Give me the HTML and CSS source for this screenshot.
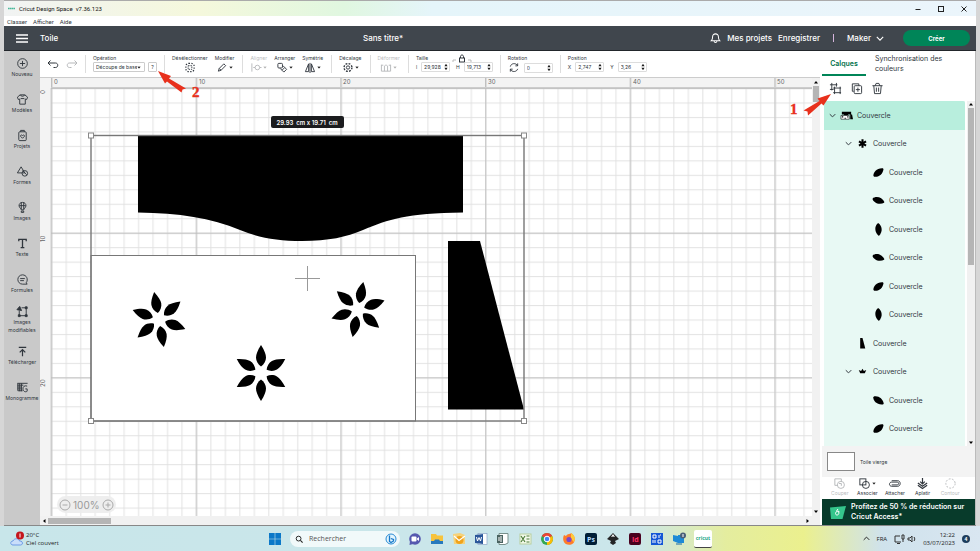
FILE: index.html
```html
<!DOCTYPE html>
<html lang="fr">
<head>
  <meta charset="UTF-8" />
  <meta name="viewport" content="width=device-width, initial-scale=1.0" />
  <title>Cricut Design Space v7.36.123</title>
  <link rel="stylesheet" href="styles.css">
</head>
<body>
  <svg class="defs" aria-hidden="true">
    <symbol id="leaf" viewBox="-6 -6 12 12"><path d="M-6 0C-3.5-3.6 2-4.2 6 0C2 4.200-3.5 3.600-6 0Z"/></symbol>
    <symbol id="caret" viewBox="0 0 6 4"><path d="M0.5 0.5H5.5L3 3.7Z"/></symbol>
    <symbol id="chevron" viewBox="0 0 10 6"><path d="M1 1L5 5L9 1" fill="none" stroke="currentColor" stroke-width="1.4"/></symbol>
    <symbol id="stepper" viewBox="0 0 6 10"><path d="M1 4L3 1L5 4ZM1 6L3 9L5 6Z"/></symbol>
  </svg>

  <div class="window">
    <div class="titlebar">
      <svg class="mark" viewBox="0 0 7 3"><path d="M0 1.5H7" stroke="#49b89a" stroke-width="1.4" stroke-dasharray="1.6 .3"/></svg>
      <span class="app-name">Cricut Design Space&nbsp; v7.36.123</span>
      <button aria-label="Réduire"><svg viewBox="0 0 8 8"><path d="M1.5 4.5H6.5"/></svg></button>
      <button aria-label="Agrandir"><svg viewBox="0 0 8 8"><rect x="1.5" y="1.5" width="5" height="5"/></svg></button>
      <button aria-label="Fermer"><svg viewBox="0 0 8 8"><path d="M1.5 1.5L6.5 6.5M6.5 1.5L1.5 6.5"/></svg></button>
    </div>
    <nav class="menubar">
      <a href="#">Classer</a><a href="#">Afficher</a><a href="#">Aide</a>
    </nav>

    <header class="header">
      <div class="header-left">
        <button class="burger" aria-label="Menu"><svg viewBox="0 0 12 9"><path d="M0 1H12M0 4.5H12M0 8H12" stroke="#fff" stroke-width="1.3"/></svg></button>
        <span>Toile</span>
      </div>
      <h1>Sans titre*</h1>
      <div class="header-right">
        <svg class="bell" viewBox="0 0 12 13" fill="none" stroke="#fff" stroke-width="1.1"><path d="M1.5 9.5H10.5C9.3 8.5 9.2 7 9.2 5.5C9.2 3.2 7.8 2 6 2S2.8 3.2 2.8 5.5C2.8 7 2.7 8.5 1.5 9.5ZM4.5 10C4.7 12 7.3 12 7.5 10"/></svg>
        <a href="#">Mes projets</a>
        <a href="#">Enregistrer</a>
        <span class="bar"></span>
        <button class="machine">Maker <svg viewBox="0 0 10 6"><use href="#chevron"/></svg></button>
        <button class="make">Créer</button>
      </div>
    </header>

    <div class="main">
      <aside class="sidebar">
        <button><svg viewBox="0 0 14 14"><circle cx="7" cy="7" r="5.2"/><path d="M7 4.2V9.8M4.2 7H9.8"/></svg>Nouveau</button>
        <button><svg viewBox="0 0 14 14"><path d="M4.5 2H9.5L12.5 4.5L11.5 7L10 6.5V12H4V6.5L2.5 7L1.5 4.5ZM4.5 2C5.5 4 8.5 4 9.5 2M5 6H9"/></svg>Modèles</button>
        <button><svg viewBox="0 0 14 14"><rect x="3" y="3" width="8" height="9.5" rx="1"/><path d="M5 3V1.5H9V3M7 10L5 8C4.5 6.5 6.3 5.8 7 7C7.7 5.8 9.5 6.5 9 8Z"/></svg>Projets</button>
        <button><svg viewBox="0 0 14 14"><path d="M5.5 2L9.5 8.5H1.5Z"/><circle cx="9.5" cy="9" r="3"/><path d="M7 6L11.5 10.5"/></svg>Formes</button>
        <button><svg viewBox="0 0 14 14"><path d="M7 1.5C4.5 1.5 3.3 3.2 3.3 5C3.3 7 5.5 8 5.7 9.5H8.3C8.5 8 10.7 7 10.7 5C10.7 3.2 9.5 1.5 7 1.5ZM5.7 1.8V9M8.3 1.8V9M3.5 5H10.5M5.7 12.3H8.3V10.8H5.7Z"/></svg>Images</button>
        <button><svg viewBox="0 0 14 14"><path d="M3 4.5V2.5H11V4.5M7 2.5V11.5M5 11.5H9" stroke-width="1.4"/></svg>Texte</button>
        <button><svg viewBox="0 0 14 14"><path d="M11 10.5C13.5 7 11.5 2 7 2C4 2 2 4.3 2 7S4 12 7 12H12L11 10.5M4.5 6H9.5M4.5 8.2H8.5"/></svg>Formules</button>
        <button><svg viewBox="0 0 14 14"><path d="M3.5 6V11.5H11V3H6"/><path d="M1 5L4 1.5L6 6Z" fill="#30363d"/><path d="M10 2H12V4H10ZM10 10.5H12V12.5H10ZM2.5 10.5H4.5V12.5H2.5Z" fill="#30363d"/></svg>Images modifiables</button>
        <button><svg viewBox="0 0 14 14"><path d="M3 2.5H11M7 12V5M4 8L7 5L10 8" stroke-width="1.3"/></svg>Télécharger</button>
        <button><svg viewBox="0 0 14 14"><path d="M1.5 2.5H12.5M1.5 4.5H8M1.5 6.5H6M1.5 8.5H6M2 10.5H7M2 2.5V10.5M4 2.5V11M6 2.5V11M12 5.5C9 4.5 7.5 6 7.5 8.5S10 12.5 12 11V8.5H10"/></svg>Monogramme</button>
      </aside>

      <section class="workspace">
        <div class="toolbar">
          <div class="history">
            <button aria-label="Annuler"><svg viewBox="0 0 12 10"><path d="M3.5 1L1 3.5L3.5 6M1 3.5H8.5C11.5 3.5 11.5 8 8.5 8H6.5"/></svg></button>
            <button aria-label="Rétablir" disabled><svg viewBox="0 0 12 10"><path d="M8.5 1L11 3.5L8.5 6M11 3.5H3.5C.5 3.5.5 8 3.5 8H5.5"/></svg></button>
          </div>
          <div class="tool operation">
            <label for="operation">Opération</label>
            <div class="row">
              <span class="select"><select id="operation"><option>Découpe de base</option></select><svg class="caret" viewBox="0 0 6 4"><use href="#caret"/></svg></span>
              <button class="help">?</button>
            </div>
          </div>
          <div class="group">
            <button class="tool"><span>Désélectionner</span><svg viewBox="0 0 12 12"><rect x="1.5" y="1.5" width="9" height="9" rx="3" stroke-width="1.3" stroke-dasharray="1.5 1.5"/><path d="M4 4H8V8H4Z" stroke-dasharray="1.5 1"/></svg></button>
            <button class="tool"><span>Modifier</span><i><svg viewBox="0 0 12 12"><path d="M2 10L3 7L8 2L10 4L5 9ZM3 7L5 9"/></svg><svg class="caret" viewBox="0 0 6 4"><use href="#caret"/></svg></i></button>
          </div>
          <div class="group">
            <button class="tool" disabled><span>Aligner</span><i><svg viewBox="0 0 12 12"><path d="M1.5 1.5V10.5M3 6H5M10 6H12"/><circle cx="7.5" cy="6" r="2.5"/></svg><svg class="caret" viewBox="0 0 6 4"><use href="#caret"/></svg></i></button>
            <button class="tool"><span>Arranger</span><i><svg viewBox="0 0 12 12"><rect x="1.5" y="1.5" width="5" height="5" rx="1"/><path d="M7 4L9 6L6 9L4 7M9 6L11 8L8 11L6 9"/></svg><svg class="caret" viewBox="0 0 6 4"><use href="#caret"/></svg></i></button>
            <button class="tool"><span>Symétrie</span><i><svg viewBox="0 0 12 12"><path d="M4.5 2L1 10.5H4.5ZM7.5 2L11 10.5H7.5ZM6 1V12"/></svg><svg class="caret" viewBox="0 0 6 4"><use href="#caret"/></svg></i></button>
          </div>
          <div class="group">
            <button class="tool"><span>Décalage</span><i><svg viewBox="0 0 12 12"><circle cx="6" cy="6" r="1.8"/><circle cx="6" cy="6" r="4.3" stroke-width="1.5" stroke-dasharray="2 1.4"/></svg><svg class="caret" viewBox="0 0 6 4"><use href="#caret"/></svg></i></button>
          </div>
          <div class="group">
            <button class="tool" disabled><span>Déformer</span><i><svg viewBox="0 0 12 12"><path d="M1 3V10H11V3M4.3 4V10M7.7 4V10M1 3.5H3M5 3.5H7M9 3.5H11"/></svg><svg class="caret" viewBox="0 0 6 4"><use href="#caret"/></svg></i></button>
          </div>
          <div class="tool size">
            <div class="row title"><span>Taille</span><svg class="lock" viewBox="0 0 20 9"><path d="M1 8V6H4M19 8V6H16" stroke="#bbb"/><rect x="7.5" y="4" width="5" height="4"/><path d="M8.5 4V2.5C8.5.5 11.5.5 11.5 2.5V4"/></svg></div>
            <div class="row">
              <label class="field">l<span><input value="29,928"><svg class="step" viewBox="0 0 6 10"><use href="#stepper"/></svg></span></label>
              <label class="field">H<span><input value="19,713"><svg class="step" viewBox="0 0 6 10"><use href="#stepper"/></svg></span></label>
            </div>
          </div>
          <div class="tool rotation">
            <span>Rotation</span>
            <label class="field"><svg viewBox="0 0 12 12"><path d="M2 5C3 1 8 .8 10 4M10 1.5V4.2H7.5M10 7.5C9 11 4 11.5 2 8M2 10.5V7.8H4.5"/></svg><span><input aria-label="Rotation" value="0"><svg class="step" viewBox="0 0 6 10"><use href="#stepper"/></svg></span></label>
          </div>
          <div class="tool position">
            <span>Position</span>
            <div class="row">
              <label class="field">X<span><input value="2,747"><svg class="step" viewBox="0 0 6 10"><use href="#stepper"/></svg></span></label>
              <label class="field">Y<span><input value="3,26"><svg class="step" viewBox="0 0 6 10"><use href="#stepper"/></svg></span></label>
            </div>
          </div>
        </div>

        <div class="board">
          <div class="corner"></div>
          <svg class="ruler">
            <defs><pattern id="ticks" width="144.67" height="12" patternUnits="userSpaceOnUse"><path d="M.8 0V12" stroke="#aaa"/></pattern></defs>
            <rect width="100%" height="12" fill="url(#ticks)"/>
            <text x="3" y="6">0</text><text x="148" y="6">10</text><text x="292" y="6">20</text><text x="437" y="6">30</text><text x="582" y="6">40</text><text x="726" y="6">50</text>
          </svg>
          <div class="scroll-v">
            <svg viewBox="0 0 6 4"><path d="M1 3.5L3 1L5 3.5Z"/></svg><span></span>
            <svg class="end" viewBox="0 0 6 4"><path d="M1 .5L3 3L5 .5Z"/></svg>
          </div>
          <svg class="ruler-v">
            <g transform="rotate(-90)"><text x="-6" y="5">0</text><text x="-154" y="5">10</text><text x="-299" y="5">20</text></g>
          </svg>
          <div class="canvas">
            <svg class="drawing">
              <defs>
                <pattern id="minor" width="14.467" height="14.467" patternUnits="userSpaceOnUse"><path d="M.8 0V14.467M0 .6H14.467" stroke="#dfdfdf" stroke-width=".9"/></pattern>
                <pattern id="major" width="144.67" height="144.67" patternUnits="userSpaceOnUse"><path d="M.8 0V144.67M0 .6H144.67" stroke="#bbb" stroke-width=".9"/></pattern>
                <path id="petal" d="M0-28C3.5-22.5 5-18.5 5-15.5C5-12 3-8.5 0-6.5C-3-8.5-5-12-5-15.5C-5-18.5-3.5-22.5 0-28Z"/>
                <g id="flower"><use href="#petal"/><use href="#petal" transform="rotate(60)"/><use href="#petal" transform="rotate(120)"/><use href="#petal" transform="rotate(180)"/><use href="#petal" transform="rotate(240)"/><use href="#petal" transform="rotate(300)"/></g>
              </defs>
              <rect width="100%" height="100%" fill="url(#minor)"/>
              <rect width="100%" height="100%" fill="url(#major)"/>
              <path d="M87 48H412V124.5C355 125.5 338 131 312 142C295 149 278 153 251 153C226 153 208 150 189 142C160 130 128 125 87 124.5Z"/>
              <path d="M397 153H429L473 321.5H397Z"/>
              <rect x="40" y="167.5" width="324.5" height="165.5" fill="#fff" stroke="#777"/>
              <use href="#flower" transform="translate(108 231.5) rotate(-10)"/>
              <use href="#flower" transform="translate(210 285)"/>
              <use href="#flower" transform="translate(307 221.5) rotate(11)"/>
              <path d="M244 190.5H269M256.5 178V203" stroke="#999"/>
              <rect x="40" y="47.5" width="433" height="285.5" fill="none" stroke="#777" stroke-width="1.4"/>
              <g fill="#fff" stroke="#888"><rect x="37.5" y="45" width="5" height="5"/><rect x="470.5" y="45" width="5" height="5"/><rect x="37.5" y="330.5" width="5" height="5"/><rect x="470.5" y="330.5" width="5" height="5"/></g>
              <rect x="220" y="28" width="73" height="12" rx="2" fill="#1b1c1e"/>
              <text class="dimension" x="256" y="37">29.93&#160; cm x 19.71&#160; cm</text>
            </svg>
            <div class="zoom">
              <button aria-label="Zoom arrière"><svg viewBox="0 0 12 12"><circle cx="6" cy="6" r="5"/><path d="M3.5 6H8.5"/></svg></button>
              <span>100%</span>
              <button aria-label="Zoom avant"><svg viewBox="0 0 12 12"><circle cx="6" cy="6" r="5"/><path d="M3.5 6H8.5M6 3.5V8.5"/></svg></button>
            </div>
          </div>
          <div class="scroll-h">
            <svg viewBox="0 0 4 6"><path d="M3.5 1L1 3L3.5 5Z"/></svg><span></span>
            <svg class="end" viewBox="0 0 4 6"><path d="M.5 1L3 3L.5 5Z"/></svg>
          </div>
        </div>
      </section>

      <aside class="panel">
        <div class="tabs">
          <button class="active">Calques</button>
          <button>Synchronisation des couleurs</button>
        </div>
        <div class="layer-tools">
          <button aria-label="Dissocier"><svg viewBox="0 0 14 14"><path d="M3 1V9M1 3H9M8 1V5M1 8H5M6 5V13M12 5V13M4.5 6.5H13M4.5 11.5H13"/></svg></button>
          <button aria-label="Dupliquer"><svg viewBox="0 0 14 14"><path d="M4 10H2.5V2H9.5V4"/><rect x="4.5" y="4" width="8" height="8.5" rx="1"/><path d="M8.5 6V10.5M6.3 8.2H10.7"/></svg></button>
          <button aria-label="Supprimer"><svg viewBox="0 0 14 14"><path d="M1.5 4H12.5M4.5 4L5.5 1.5H8.5L9.5 4M3 4L3.8 12.5H10.2L11 4M5.8 6V10.5M8.2 6V10.5"/></svg></button>
        </div>
        <div class="layers">
          <ul>
            <li class="selected"><svg class="chev" viewBox="0 0 10 6"><use href="#chevron"/></svg><svg class="thumb" viewBox="-7 -7 14 14"><path d="M-5-4H5V-1L2-1L1 0H-2L-3-1H-5ZM4-1H6L7 4H4Z"/><path d="M-6 0H3V4H-6Z" fill="#fff" stroke="#000" stroke-width=".6"/><path d="M-5 1.5H-3.5M-2 3H-.8M.8 1.5H2" stroke="#000" stroke-width="1.2"/></svg>Couvercle</li>
            <li class="child"><svg class="chev" viewBox="0 0 10 6"><use href="#chevron"/></svg><svg class="thumb" viewBox="-7 -7 14 14"><path d="M0-4.5V4.5M-3.8-2.3L3.8 2.3M-3.8 2.3L3.8-2.3" stroke="#000" stroke-width="2.2"/></svg>Couvercle</li>
            <li class="leaf"><svg class="thumb rise" viewBox="-6 -6 12 12"><use href="#leaf" x="-6" y="-6" width="12" height="12"/></svg>Couvercle</li>
            <li class="leaf"><svg class="thumb fall" viewBox="-6 -6 12 12"><use href="#leaf" x="-6" y="-6" width="12" height="12"/></svg>Couvercle</li>
            <li class="leaf"><svg class="thumb upright" viewBox="-6 -6 12 12"><use href="#leaf" x="-6" y="-6" width="12" height="12"/></svg>Couvercle</li>
            <li class="leaf"><svg class="thumb fall" viewBox="-6 -6 12 12"><use href="#leaf" x="-6" y="-6" width="12" height="12"/></svg>Couvercle</li>
            <li class="leaf"><svg class="thumb rise" viewBox="-6 -6 12 12"><use href="#leaf" x="-6" y="-6" width="12" height="12"/></svg>Couvercle</li>
            <li class="leaf"><svg class="thumb upright" viewBox="-6 -6 12 12"><use href="#leaf" x="-6" y="-6" width="12" height="12"/></svg>Couvercle</li>
            <li class="child"><svg class="chev"></svg><svg class="thumb" viewBox="-7 -7 14 14"><path d="M-2.5-6H0L3 5.5H-2.5Z"/></svg>Couvercle</li>
            <li class="child"><svg class="chev" viewBox="0 0 10 6"><use href="#chevron"/></svg><svg class="thumb" viewBox="-7 -7 14 14"><path d="M0-3L1.5-.5L4-1.5L2.5 2H-2.5L-4-1.5L-1.5-.5Z"/></svg>Couvercle</li>
            <li class="leaf"><svg class="thumb steep" viewBox="-6 -6 12 12"><use href="#leaf" x="-6" y="-6" width="12" height="12"/></svg>Couvercle</li>
            <li class="leaf"><svg class="thumb rise" viewBox="-6 -6 12 12"><use href="#leaf" x="-6" y="-6" width="12" height="12"/></svg>Couvercle</li>
          </ul>
          <div class="scroll-v">
            <svg viewBox="0 0 6 4"><path d="M1 3.5L3 1L5 3.5Z"/></svg><span></span>
            <svg class="end" viewBox="0 0 6 4"><path d="M1 .5L3 3L5 .5Z"/></svg>
          </div>
        </div>
        <div class="blank"><span></span>Toile vierge</div>
        <div class="actions">
          <button disabled><svg viewBox="0 0 14 14"><path d="M5 9H2V2H9V5"/><circle cx="8.5" cy="8.5" r="3.8"/><path d="M6.5 7H9V9.5"/></svg>Couper</button>
          <button><i><svg viewBox="0 0 14 14"><rect x="2" y="2" width="6.5" height="6.5"/><circle cx="8.5" cy="8.5" r="3.8"/></svg><svg class="caret" viewBox="0 0 6 4"><use href="#caret"/></svg></i>Associer</button>
          <button><svg viewBox="0 0 14 14"><path d="M4 8.5H10C12 8.5 12 5.5 10 5.5H4C.8 5.5.8 10 4 10H10.5C14 10 14 4 10.5 4H4"/></svg>Attacher</button>
          <button><svg viewBox="0 0 14 14"><path d="M7 1V7M4.5 5L7 7.5L9.5 5M2 6.5L7 10L12 6.5M2 9L7 12.5L12 9" stroke-width="1.3"/></svg>Aplatir</button>
          <button disabled><svg viewBox="0 0 14 14"><circle cx="7" cy="7" r="5" stroke-dasharray="2 1.5"/></svg>Contour</button>
        </div>
        <a class="promo" href="#">
          <svg viewBox="0 0 16 13"><path d="M0 1.5L16 0L12.5 13H1Z" fill="#35c58b"/><path d="M9 5.5C8 4.5 5.5 5.5 5.5 7.5S8.5 9.5 8.8 7.5V5M6.5 5L8 3" fill="none" stroke="#fff"/></svg>
          <span>Profitez de 50 % de réduction sur Cricut Access*</span>
        </a>
      </aside>
    </div>
  </div>

  <div class="taskbar">
    <div class="weather">
      <svg viewBox="0 0 15 15"><path d="M3 14C0 14 0 10 3 10C4 7 9 7 9.5 10C13 9.5 13.5 14 10.5 14Z" fill="#c9defa" stroke="#6e9be6"/><circle cx="10" cy="4.5" r="4" fill="#c4161c"/><path d="M10 2.5V6.5" stroke="#fff"/></svg>
      <p>20°C<br>Ciel couvert</p>
    </div>
    <div class="apps">
      <svg viewBox="0 0 14 14"><path d="M1 1H6.7V6.7H1ZM7.3 1H13V6.7H7.3ZM1 7.3H6.7V13H1ZM7.3 7.3H13V13H7.3Z" fill="#0b78c8"/></svg>
      <label class="search">
        <svg viewBox="0 0 10 10"><circle cx="4.5" cy="4.5" r="3" fill="none" stroke="#222" stroke-width="1.2"/><path d="M6.8 6.8L9.5 9.5" stroke="#222" stroke-width="1.3"/></svg>
        <input placeholder="Rechercher">
        <svg class="bing" viewBox="0 0 12 12"><circle cx="6" cy="6" r="5" fill="#e3f5fd" stroke="#2a8bd4"/><path d="M4.5 2.5V8.5L6 9.5L8.5 8V6.5L5.8 5.5" fill="none" stroke="#1577c9" stroke-width="1.3"/></svg>
      </label>
      <svg viewBox="0 0 14 14"><path d="M1.5 13L2 9L5 12Z" fill="#5558af"/><circle cx="7" cy="7" r="5.8" fill="#5558af"/><rect x="3.5" y="4.5" width="5" height="5" rx="1" fill="#fff"/><path d="M9 6.5L11 5V9L9 7.5Z" fill="#fff"/></svg>
      <svg viewBox="0 0 14 14"><path d="M1 2H6L7 3.5H13V12H1Z" fill="#f7c33c"/><path d="M1 9H4L5 7.5H9L10 9H13V12H1Z" fill="#2779bd"/></svg>
      <svg viewBox="0 0 14 14"><path d="M1 2L8 1L13 3V12H2Z" fill="#f6d27a"/><circle cx="7.5" cy="8" r="4" fill="#f0a31c"/><path d="M2 4L7 8.5L13 4" fill="none" stroke="#fff" stroke-width="1.2"/></svg>
      <svg viewBox="0 0 14 14"><rect x="4" y="1.5" width="9" height="11" fill="#fff" stroke="#8ba4c8" stroke-width=".7"/><path d="M1 3L9 2V12L1 11Z" fill="#2b579a"/><path d="M2.5 5L3.5 9L5 5.5L6.5 9L7.5 5" fill="none" stroke="#fff"/></svg>
      <svg viewBox="0 0 14 14"><path d="M3 1.5H12V11L9 12.5H3Z" fill="#fff" stroke="#78908c"/><path d="M1 3H7V11H1Z" fill="#4a6361"/><path d="M3 5V9M5 4V10M9 4V9" stroke="#fff"/></svg>
      <svg viewBox="0 0 14 14"><rect x="2" y="2" width="11" height="10" fill="#f3faeb" stroke="#b9cf9e"/><path d="M3 4L7 10M7 4L3 10M8.5 4H11.5M8.5 7H11.5M8.5 10H11.5" stroke="#4f7d3b" stroke-width="1.2"/></svg>
      <svg viewBox="0 0 14 14"><circle cx="7" cy="7" r="6" fill="#34a853"/><path d="M7 7L1.8 4A6 6 0 0 1 12.2 4Z" fill="#ea4335"/><path d="M7 7L12.2 4A6 6 0 0 1 7 13Z" fill="#fbbc05"/><circle cx="7" cy="7" r="2.8" fill="#4285f4" stroke="#fff"/></svg>
      <svg viewBox="0 0 14 14"><path d="M2 3L4 4C6 1 8 3 9 1C13 3 14 9 11 11.5C8 14 3 13 1.5 9C1 7 1 5 2 3Z" fill="#ff7c2a"/><path d="M9 1C13 3 14 8 11.5 10L9 6Z" fill="#ffca3a"/><circle cx="7" cy="7.5" r="2.6" fill="#7e45c9"/></svg>
      <svg viewBox="0 0 14 14"><rect x="1" y="1" width="12" height="12" rx="2" fill="#001e36"/><text x="3" y="9.5" fill="#b5dcff">Ps</text></svg>
      <svg viewBox="0 0 14 14"><path d="M7 1L13 7L9 9L10 11L7 13L4 11L5 9L1 7Z" fill="#242526"/><path d="M7 2L9 5L7 4.5L5 5Z" fill="#fff"/></svg>
      <svg viewBox="0 0 14 14"><rect x="1" y="1" width="12" height="12" rx="2" fill="#49021f"/><text x="4" y="9.5" fill="#ff3366">Id</text></svg>
      <svg viewBox="0 0 14 14"><rect x="1" y="1" width="12" height="12" fill="#1557d6"/><path d="M3 3H6V6H3ZM9 3V6M11 3H10M3 8V11M5 8V11M8 8H11V11H8Z" fill="none" stroke="#fff"/></svg>
      <svg viewBox="0 0 14 14"><path d="M1 3L6 4V11L1 9ZM6 3H12V11H6Z" fill="#1d8ad6"/><path d="M4 12H10" stroke="#1769a5"/><circle cx="11" cy="3.5" r="3" fill="#4a5f78"/><path d="M11 2V5" stroke="#fff"/></svg>
      <span class="cricut">cricut</span>
    </div>
    <div class="tray">
      <svg class="up" viewBox="0 0 10 6"><path d="M1 5L5 1L9 5" fill="none" stroke="#222" stroke-width="1.4"/></svg>
      <span>FRA</span>
      <svg viewBox="0 0 22 10" class="status"><path d="M6 2H1V8H7M3 9.5H6M8 1H10V5H8ZM9 5V8M14 4H16L18 2V8L16 6H14ZM20 3C21 4.5 21 5.5 20 7" fill="none" stroke="#333"/></svg>
      <p>12:22<br>03/07/2023</p>
      <b>4</b>
    </div>
  </div>

  <!-- step markers -->
  <svg class="note note-panel" viewBox="0 0 42 26"><text x="0" y="21">1</text><path d="M41 1L33.5 12.5L31.5 10.5L18 22.5L17.5 18.5L13.5 17.5L29.5 8L27.5 5.5Z"/></svg>
  <svg class="note note-tool" viewBox="0 0 44 30"><text x="34" y="27">2</text><path d="M0 1L13 6L11 8.500L28 18.500L24.500 19.500L23.500 22.500L9 11.500L7 13.500Z"/></svg>
</body>
</html>
```
FILE: styles.css
```css
* {
  box-sizing: border-box;
}

body {
  margin: 0;
  height: 100vh;
  display: flex;
  flex-direction: column;
  position: relative;
  overflow: hidden;
  background: #d6d6d6;
  font-family: Inter, "Liberation Sans", sans-serif;
  font-size: 7px;
  color: #30363d;
}

button, input, select {
  font: inherit;
  color: inherit;
  background: none;
  border: 0;
  padding: 0;
  margin: 0;
}

a {
  color: inherit;
  text-decoration: none;
}

p, ul, h1 {
  margin: 0;
  padding: 0;
}

svg {
  display: block;
  flex: none;
}

.defs {
  position: absolute;
  width: 0;
  height: 0;
}

.window {
  flex: 1;
  min-height: 0;
  margin: 0 4px;
  display: flex;
  flex-direction: column;
  background: #fff;
  border-top: 1px solid #aaa;
  border-bottom: 1px solid #888;
}

.titlebar {
  height: 15px;
  display: flex;
  align-items: center;
  padding: 0 1px 0 4px;
  font-family: Roboto, sans-serif;
  font-size: 6px;
  color: #111;
  background: linear-gradient(90deg, #f1f3f3, #f5f8dc 20%, #e0f7e0 35%, #e5f5fa 44%, #ebf5fb);
}

.titlebar .mark {
  width: 7px;
  height: 3px;
  margin-right: 4px;
}

.app-name {
  flex: 1;
}

.titlebar button {
  width: 23px;
  display: flex;
  justify-content: center;
}

.titlebar button svg {
  width: 8px;
  height: 8px;
  fill: none;
  stroke: #222;
}

.menubar {
  height: 10px;
  display: flex;
  gap: 6px;
  align-items: center;
  padding-left: 3px;
  font-family: Roboto, sans-serif;
  font-size: 6px;
}

.header {
  height: 25px;
  display: grid;
  grid-template-columns: 359px 1fr auto;
  align-items: center;
  background: #40464d;
  border-bottom: 1px solid #22262b;
  color: #fff;
  font-size: 8px;
  font-weight: 500;
}

.header h1 {
  font-size: 8px;
  font-weight: 500;
}

.header-left, .header-right {
  display: flex;
  align-items: center;
}

.header-left {
  padding-left: 12px;
  gap: 12px;
}

.burger svg {
  width: 12px;
  height: 9px;
}

.header-right {
  gap: 6px;
  padding-right: 6px;
}

.bell {
  width: 11px;
  height: 12px;
}

.bar {
  width: 1px;
  height: 8px;
  margin: 0 7px;
  background: #d5b4dc;
}

.machine {
  display: flex;
  align-items: center;
  gap: 5px;
}

.machine svg {
  width: 8px;
  height: 5px;
}

.make {
  width: 67px;
  height: 16px;
  margin-left: 13px;
  border-radius: 8px;
  background: #008558;
  font-size: 6px;
  font-weight: 700;
}

.main {
  flex: 1;
  min-height: 0;
  display: flex;
}

.sidebar {
  width: 36px;
  background: #c9c9c9;
}

.sidebar button {
  width: 100%;
  height: 36px;
  display: flex;
  flex-direction: column;
  align-items: center;
  justify-content: center;
  padding-bottom: 4px;
  font-size: 5px;
  line-height: 8px;
}

.sidebar svg {
  width: 13px;
  height: 13px;
  fill: none;
  stroke: #30363d;
}

.workspace {
  flex: 1;
  min-width: 0;
  display: flex;
  flex-direction: column;
}

.toolbar {
  height: 26px;
  display: flex;
  align-items: center;
  font-size: 5px;
  line-height: 6px;
  white-space: nowrap;
}

.toolbar > div {
  height: 18px;
  padding: 0 7px;
  border-left: 1px solid #ddd;
}

.toolbar > .group {
  padding-right: 8px;
}

.toolbar > .history {
  border: 0;
  display: flex;
  align-items: center;
  gap: 7px;
}

.group, .row, .tool i {
  display: flex;
  align-items: center;
}

.group {
  gap: 7px;
}

.row {
  gap: 3px;
}

.tool {
  display: flex;
  flex-direction: column;
  gap: 1px;
}

button.tool {
  align-items: center;
}

.toolbar svg {
  width: 12px;
  height: 11px;
  fill: none;
  stroke: #30363d;
}

.toolbar .tool i {
  gap: 1px;
}

.toolbar .caret, .actions .caret {
  width: 4px;
  height: 3px;
  fill: #222;
  stroke: none;
}

button:disabled {
  opacity: 0.35;
}

.select {
  width: 52px;
  height: 10px;
  display: flex;
  align-items: center;
  padding: 0 3px 0 2px;
  border: 1px solid #ccc;
  border-radius: 1px;
}

.select select {
  flex: 1;
  min-width: 0;
  appearance: none;
}

.help {
  width: 9px;
  height: 10px;
  border: 1px solid #ccc;
  border-radius: 1px;
}

.field {
  display: flex;
  align-items: center;
  gap: 4px;
}

.field span {
  display: flex;
  align-items: center;
  height: 10px;
  border: 1px solid #ddd;
  border-radius: 1px;
  padding-left: 2px;
}

.field input {
  width: 19px;
  height: 8px;
}

.toolbar .step {
  width: 6px;
  height: 8px;
  fill: #222;
  stroke: none;
}

.size .row, .position .row {
  gap: 6px;
}

.size .title {
  gap: 24px;
  height: 6px;
}

.toolbar .lock {
  width: 20px;
  height: 9px;
}

.board {
  flex: 1;
  min-height: 0;
  display: grid;
  grid-template-columns: 11px 1fr 8px;
  grid-template-rows: 10px 1fr 9px;
  margin-right: 2px;
  border-top: 1px solid #ccc;
}

.corner, .ruler, .ruler-v {
  background: #f3f3f3;
}

.ruler, .ruler-v {
  width: 100%;
  height: 100%;
  font-size: 6px;
  fill: #666;
}

.ruler {
  border-bottom: 1px solid #ccc;
}

.ruler-v {
  border-right: 1px solid #e2e2e2;
}

.board > .scroll-v {
  grid-column: 3;
  grid-row: 1 / 3;
}

.scroll-v, .scroll-h {
  display: flex;
  align-items: center;
  gap: 2px;
  background: #f1f1f1;
}

.scroll-v {
  flex-direction: column;
  padding: 2px 0;
}

.scroll-v svg {
  width: 6px;
  height: 4px;
}

.scroll-v span {
  width: 6px;
  height: 16px;
  background: #b5b5b5;
}

.scroll-v .end {
  margin-top: auto;
}

.scroll-h {
  grid-column: 1 / 4;
  padding: 0 10px 0 2px;
}

.scroll-h svg {
  width: 4px;
  height: 6px;
}

.scroll-h span {
  width: 63px;
  height: 6px;
  background: #b5b5b5;
}

.scroll-h .end {
  margin-left: auto;
}

.canvas {
  position: relative;
  overflow: hidden;
}

.drawing {
  width: 100%;
  height: 100%;
}

.dimension {
  font-size: 6px;
  font-weight: 600;
  fill: #fff;
  text-anchor: middle;
}

.zoom {
  position: absolute;
  left: 6px;
  bottom: 3px;
  height: 17px;
  display: flex;
  align-items: center;
  gap: 2px;
  padding: 0 2px;
  border-radius: 9px;
  background: rgba(236, 236, 236, 0.9);
  font-size: 10px;
  color: #999;
}

.zoom svg {
  width: 12px;
  height: 12px;
  fill: none;
  stroke: #aaa;
}

.panel {
  width: 154px;
  display: flex;
  flex-direction: column;
  border-right: 1px solid #bbb;
}

.tabs {
  height: 25px;
  display: flex;
  line-height: 10px;
}

.tabs button {
  flex: 1;
  padding: 0 9px;
  text-align: left;
}

.tabs .active {
  flex: none;
  width: 44px;
  padding: 3px 0 0;
  text-align: center;
  font-weight: 600;
  color: #00704a;
  border-bottom: 2px solid #008558;
}

.layer-tools {
  height: 25px;
  display: flex;
  align-items: center;
  gap: 8px;
  padding-left: 7px;
}

.layer-tools svg, .actions svg {
  width: 13px;
  height: 13px;
  fill: none;
  stroke: #30363d;
}

.layers {
  flex: 1;
  min-height: 0;
  display: flex;
  gap: 2px;
  padding-left: 2px;
}

.layers ul {
  flex: 1;
  display: flex;
  flex-direction: column;
  padding-bottom: 3px;
  background: #e8f9f4;
  list-style: none;
}

.layers li {
  flex: 1;
  display: flex;
  align-items: center;
  gap: 4px;
  padding-left: 5px;
}

.layers .selected {
  background: #b8eedd;
  border-radius: 2px 2px 0 0;
}

.layers .child {
  padding-left: 21px;
}

.layers .leaf {
  padding-left: 48px;
}

.chev {
  width: 7px;
  height: 5px;
}

.thumb {
  width: 13px;
  height: 13px;
}

.rise {
  transform: rotate(-38deg);
}

.fall {
  transform: rotate(18deg);
}

.steep {
  transform: rotate(35deg);
}

.upright {
  transform: rotate(86deg);
}

.layers .scroll-v {
  width: 8px;
  padding: 1px 0;
}

.layers .scroll-v span {
  height: 157px;
}

.blank {
  height: 31px;
  display: flex;
  align-items: center;
  gap: 5px;
  padding-left: 5px;
  background: #f3f3f3;
  font-size: 5px;
}

.blank span {
  width: 28px;
  height: 19px;
  border: 1px solid #888;
  background: #fff;
}

.actions {
  height: 22px;
  display: flex;
  padding: 0 11px 0 4px;
}

.actions button {
  flex: 1;
  display: flex;
  flex-direction: column;
  align-items: center;
  justify-content: center;
  padding-bottom: 3px;
  font-size: 5px;
  line-height: 7px;
}

.actions i {
  display: flex;
  align-items: center;
  gap: 1px;
}

.promo {
  height: 26px;
  display: flex;
  align-items: center;
  gap: 5px;
  padding: 0 8px;
  background: #083b2b;
  color: #fff;
  font-weight: 600;
  line-height: 10px;
}

.promo svg {
  width: 16px;
  height: 13px;
}

.taskbar {
  height: 25px;
  display: grid;
  grid-template-columns: 1fr auto 1fr;
  align-items: center;
  padding: 0 10px;
  font-family: "Open Sans", sans-serif;
  font-size: 6px;
  line-height: 8px;
  color: #222;
  background: linear-gradient(90deg, #c8e6ea, #cbe6ea 65%, #e4ed9f 74%, #ebf08e 82%, #cfe2ec 90%, #d9e6f1);
}

.weather, .tray, .apps {
  display: flex;
  align-items: center;
}

.weather {
  gap: 1px;
}

.weather svg {
  width: 15px;
  height: 15px;
}

.apps {
  gap: 8px;
}

.apps > svg {
  width: 14px;
  height: 14px;
}

.apps text {
  font: 700 7px "Open Sans", sans-serif;
}

.search {
  width: 110px;
  height: 16px;
  display: flex;
  align-items: center;
  gap: 6px;
  padding: 0 3px 0 5px;
  border-radius: 8px;
  background: #f1f9fa;
  font-size: 7px;
}

.search input {
  flex: 1;
  min-width: 0;
}

.search input::placeholder {
  color: #555;
}

.search svg {
  width: 8px;
  height: 8px;
}

.search .bing {
  width: 12px;
  height: 12px;
}

.cricut {
  width: 18px;
  height: 18px;
  display: flex;
  align-items: center;
  justify-content: center;
  border-bottom: 1px solid #444;
  border-radius: 2px;
  background: #fff;
  font-size: 5px;
  font-weight: 700;
  color: #1ea886;
}

.tray {
  justify-content: flex-end;
  gap: 7px;
}

.tray .up {
  width: 7px;
  height: 5px;
}

.status {
  width: 22px;
  height: 10px;
}

.tray p {
  text-align: right;
}

.tray b {
  width: 8px;
  height: 8px;
  border-radius: 4px;
  background: #1d3d5c;
  color: #fff;
  font-size: 5px;
  text-align: center;
}

.note {
  position: absolute;
  fill: #e8301c;
  pointer-events: none;
}

.note text {
  font: 700 15px "Liberation Serif", serif;
  stroke: #e8301c;
  stroke-width: 0.4px;
}

.note-panel {
  right: 148px;
  top: 93px;
  width: 42px;
  height: 26px;
}

.note-tool {
  left: 158px;
  top: 70px;
  width: 44px;
  height: 30px;
}
```
